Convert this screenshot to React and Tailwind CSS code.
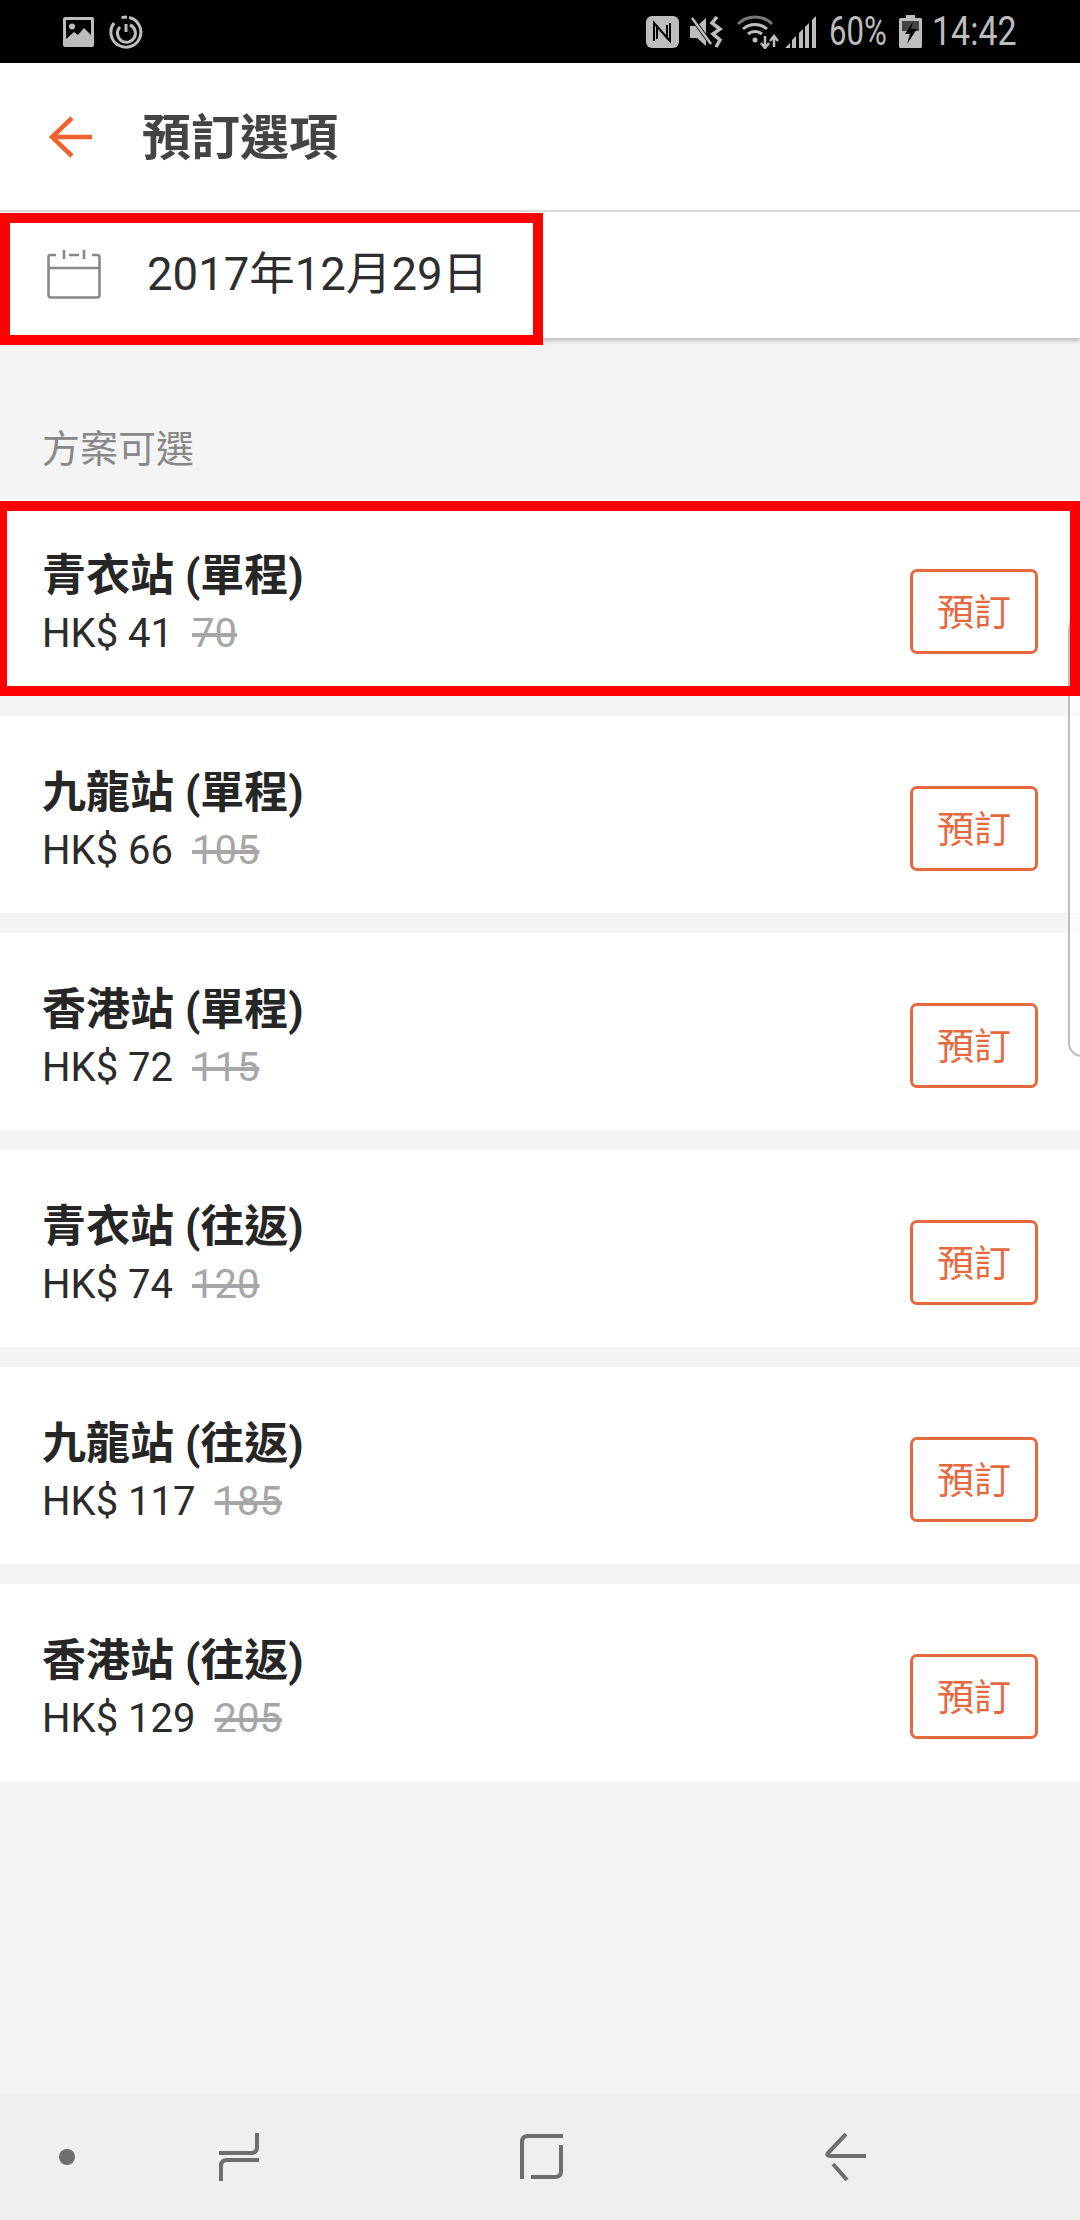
const rows = [
  ["青衣站 (單程)", "41", "70"],
  ["九龍站 (單程)", "66", "105"],
  ["香港站 (單程)", "72", "115"],
  ["青衣站 (往返)", "74", "120"],
  ["九龍站 (往返)", "117", "185"],
  ["香港站 (往返)", "129", "205"],
];

function StatusBar() {
  return (
    <div className="h-[63px] bg-black flex items-center text-[#bdbdbd] shrink-0">
      <svg width="31" height="30" viewBox="0 0 31 30" className="ml-[63px]">
        <rect width="31" height="30" rx="2" fill="#bdbdbd" />
        <rect x="3" y="3" width="25" height="19" fill="#000" />
        <circle cx="9" cy="9.5" r="3" fill="#bdbdbd" />
        <path d="M3 22 L11 15 L15 18 L21 11 L28 18 V24 H3Z" fill="#bdbdbd" />
      </svg>
      <svg width="34" height="34" viewBox="0 0 34 34" className="ml-[15px]" fill="none" stroke="#bdbdbd">
        <path d="M20 2.5 A15 15 0 1 1 5 8" strokeWidth="3" />
        <path d="M12.5 2.5 L18 2" strokeWidth="3" />
        <path d="M11 12 A9 9 0 1 0 21 10" strokeWidth="3" />
        <path d="M17 9 V17" strokeWidth="3" />
      </svg>
      <svg width="33" height="32" viewBox="0 0 33 32" className="ml-[503px]">
        <rect width="33" height="32" rx="6" fill="#bdbdbd" />
        <path d="M8 25 V7 L24 25 V7" fill="none" stroke="#000" strokeWidth="2" />
        <path d="M11 9 V23 M21 9 V23" fill="none" stroke="#000" strokeWidth="2" />
      </svg>
      <svg width="34" height="32" viewBox="0 0 34 32" className="ml-[10px]" fill="none">
        <path d="M1 10 H8 L17 2 V30 L8 22 H1Z" fill="#bdbdbd" />
        <path d="M3 2 L22 28" stroke="#000" strokeWidth="4" />
        <path d="M3 2 L22 28" stroke="#bdbdbd" strokeWidth="2.5" />
        <path d="M28 1 L23 7 L31 13 L24 18 L31 24 L27 31" stroke="#bdbdbd" strokeWidth="3.5" />
      </svg>
      <svg width="42" height="34" viewBox="0 0 42 34" className="ml-[14px]" fill="none">
        <path d="M1 9 A24 24 0 0 1 35 9" stroke="#777" strokeWidth="3" />
        <path d="M6 14 A18 18 0 0 1 30 14" stroke="#bdbdbd" strokeWidth="3" />
        <path d="M11 19 A11 11 0 0 1 25 19" stroke="#bdbdbd" strokeWidth="3" />
        <circle cx="18" cy="25" r="2.5" fill="#bdbdbd" />
        <path d="M28 21 V32 M24 28 L28 33 L32 28" stroke="#bdbdbd" strokeWidth="2.5" />
        <path d="M37 32 V22 M33 26 L37 21 L41 26" stroke="#bdbdbd" strokeWidth="2.5" />
      </svg>
      <svg width="31" height="32" viewBox="0 0 31 32" className="ml-[6px]">
        <path d="M0 32 L5 27 V32Z M7 32 V24 L11 20 V32Z M14 32 V17 L18 13 V32Z M20 32 V11 L24 7 V32Z M27 32 V4 L31 0 V32Z" fill="#bdbdbd" />
      </svg>
      <span className="ml-[13px] w-[60px] text-[41px] leading-none font-['Roboto',sans-serif] scale-x-[0.76] origin-left whitespace-nowrap">60%</span>
      <svg width="23" height="33" viewBox="0 0 23 33" className="ml-[10px]">
        <rect x="7" y="0" width="9" height="4" fill="#bdbdbd" />
        <rect x="0" y="3" width="23" height="30" rx="1.5" fill="#bdbdbd" />
        <rect x="3" y="6" width="17" height="10" fill="#444" />
        <path d="M14 7 L6 19 H11 L8 29 L18 14 H12 Z" fill="#000" />
      </svg>
      <span className="ml-[10px] w-[81px] text-[40px] leading-none font-['Roboto',sans-serif] scale-x-[0.85] origin-left whitespace-nowrap">14:42</span>
    </div>
  );
}

function Card({ title, price, old, marked }) {
  return (
    <div className="relative h-[197px] bg-white pl-[42px] pr-[42px] pt-[13px] flex items-center justify-between">
      <div className="flex flex-col mt-[2px]">
        <div className="text-[44px] leading-[57px] font-bold text-[#262626] whitespace-nowrap">{title}</div>
        <div className="text-[40px] leading-[57px] text-[#2b2b2b] whitespace-nowrap">
          HK$ {price}
          <span className="ml-[19px] text-[#a6a6a6] line-through">{old}</span>
        </div>
      </div>
      <div className="mt-[14px] w-[128px] h-[85px] rounded-[7px] border-[3px] border-[#e5683e] flex items-center justify-center pt-[6px] text-[37px] text-[#e5683e]">
        預訂
      </div>
      {marked && (
        <div className="absolute z-20 top-[2px] left-0 right-0 bottom-0 border-[10px] border-l-[7px] border-[#ff0000]" />
      )}
    </div>
  );
}

export default function App() {
  return (
    <div className="relative w-[1080px] h-[2220px] overflow-hidden bg-[#f4f4f4] flex flex-col font-['Roboto','Noto_Sans_CJK_TC',sans-serif]">
      <StatusBar />
      <div className="h-[149px] shrink-0 bg-white border-b-2 border-[#dcdcdc] flex items-center">
        <svg width="44" height="42" viewBox="0 0 44 42" className="ml-[49px]" fill="none" stroke="#f2622f" strokeWidth="4.5">
          <path d="M43 21 H3" />
          <path d="M23 2 L3 21 L23 40" />
        </svg>
        <div className="ml-[49px] mt-[4px] text-[49px] leading-none font-bold text-[#444444]">預訂選項</div>
      </div>
      <div className="relative h-[126px] shrink-0 bg-white flex items-center shadow-[0_3px_4px_rgba(0,0,0,0.22)] z-10">
        <svg width="54" height="50" viewBox="0 0 54 50" className="ml-[47px] mt-[-3px]" fill="none" stroke="#888888" strokeWidth="2.6">
          <path d="M9 6 H3.5 Q1.5 6 1.5 8 V46 Q1.5 48.500 4 48.500 H50 Q52.500 48.500 52.500 46 V8 Q52.500 6 50.500 6 H45" />
          <path d="M1.5 19 H52.500" />
          <path d="M17 1 V10 M37 1 V10 M22 6 H32" />
        </svg>
        <div className="ml-[46px] text-[45.5px] leading-none text-[#2e2e2e] whitespace-nowrap">2017年12月29日</div>
        <div className="absolute top-[1px] left-0 w-[543px] h-[132px] border-[10px] border-[#ff0000]" />
      </div>
      <div className="h-[161px] shrink-0 pl-[42px] pt-[86px] text-[38px] leading-[50px] text-[#888888]">方案可選</div>
      <div className="flex flex-col gap-[20px]">
        {rows.map((r, i) => (
          <Card key={i} title={r[0]} price={r[1]} old={r[2]} marked={i === 0} />
        ))}
      </div>
      <div className="absolute z-10 left-[1068px] top-[615px] w-[20px] h-[442px] rounded-l-[14px] border-2 border-r-0 border-[#bcbcbc] bg-white/50" />
      <div className="mt-auto h-[127px] shrink-0 bg-[#efefef] flex items-center">
        <div className="ml-[59px] w-[16px] h-[16px] rounded-full bg-[#6e6e6e]" />
        <svg width="42" height="48" viewBox="0 0 42 48" className="ml-[143px]" fill="none" stroke="#6e6e6e" strokeWidth="4">
          <path d="M39 0 V14 Q39 20 33 20 H1" />
          <path d="M3 48 V33 Q3 27 9 27 H41" />
        </svg>
        <svg width="44" height="46" viewBox="0 0 44 46" className="ml-[260px]" fill="none" stroke="#6e6e6e" strokeWidth="4">
          <path d="M2 45 V8 Q2 2 8 2 H43" />
          <path d="M41 11 V37 Q41 43 35 43 H11" />
        </svg>
        <svg width="42" height="48" viewBox="0 0 42 48" className="ml-[261px]" fill="none" stroke="#6e6e6e" strokeWidth="4">
          <path d="M21 1 L3 20 Q1 23 5 23 H41" />
          <path d="M8 31 L22 47" />
        </svg>
      </div>
    </div>
  );
}
